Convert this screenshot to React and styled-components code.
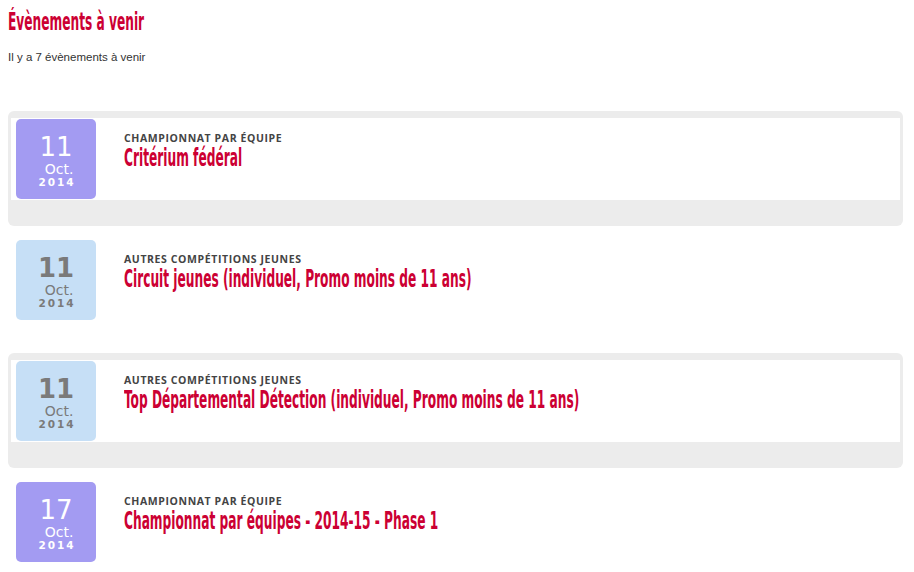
import styled, { createGlobalStyle } from "styled-components";

const events = [
	{ id: 1, day: "11", month: "Oct.", year: "2014", category: "Championnat par équipe", title: "Critérium fédéral", kind: "team" },
	{ id: 2, day: "11", month: "Oct.", year: "2014", category: "Autres compétitions jeunes", title: "Circuit jeunes (individuel, Promo moins de 11 ans)", kind: "youth" },
	{ id: 3, day: "11", month: "Oct.", year: "2014", category: "Autres compétitions jeunes", title: "Top Départemental Détection (individuel, Promo moins de 11 ans)", kind: "youth" },
	{ id: 4, day: "17", month: "Oct.", year: "2014", category: "Championnat par équipe", title: "Championnat par équipes - 2014-15 - Phase 1", kind: "team" },
];

const App = () => {
	return (
		<>
			<GlobalStyle />
			<Page>
				<Heading>Évènements à venir</Heading>
				<Count>Il y a 7 évènements à venir</Count>
				<List>
					{events.map((event, i) => (
						<Card key={event.id} striped={i % 2 === 0}>
							<Inner>
								<DateBox kind={event.kind}>
									<Day kind={event.kind}>{event.day}</Day>
									<Month>{event.month}</Month>
									<Year>{event.year}</Year>
								</DateBox>
								<Info>
									<Category>{event.category}</Category>
									<Title>{event.title}</Title>
								</Info>
							</Inner>
						</Card>
					))}
				</List>
			</Page>
		</>
	);
};

export default App;

const GlobalStyle = createGlobalStyle`
	body {
		margin: 0;
		background: #fff;
		font-family: "Liberation Sans", Arial, sans-serif;
	}
`;

// no narrow display face installed, so squeeze the condensed one
const condensed = `
	display: inline-block;
	font-family: "DejaVu Sans Condensed", "DejaVu Sans", sans-serif;
	font-weight: bold;
	color: #cc0033;
	transform: scaleX(0.565);
	transform-origin: left center;
	white-space: nowrap;
`;

const Page = styled.div`
	padding: 10px 11px 0 8px;
`;

const Heading = styled.h1`
	${condensed}
	margin: 0;
	font-size: 24px;
	line-height: 24px;
`;

const Count = styled.p`
	margin: 17px 0 0;
	font-family: "Liberation Sans", Arial, sans-serif;
	font-size: 11.5px;
	line-height: 13px;
	color: #333;
`;

const List = styled.div`
	margin-top: 47px;
`;

const Card = styled.div`
	padding: 7px 3px 26px;
	margin-bottom: 6px;
	border-radius: 6px;
	background: ${(props) => (props.striped ? "#ececec" : "transparent")};
`;

const Inner = styled.div`
	display: flex;
	align-items: flex-start;
	height: 82px;
	background: #fff;
	overflow: hidden;
`;

const DateBox = styled.div`
	flex: 0 0 80px;
	display: flex;
	flex-direction: column;
	align-items: center;
	box-sizing: border-box;
	height: 80px;
	margin: 1px 0 0 5px;
	padding-top: 15px;
	border-radius: 5px;
	font-family: "DejaVu Sans", Verdana, sans-serif;
	background: ${(props) => (props.kind === "team" ? "#a39bf2" : "#c6dff6")};
	color: ${(props) => (props.kind === "team" ? "#fff" : "#7a7a7a")};
`;

const Day = styled.div`
	font-size: 26px;
	line-height: 26px;
	font-weight: ${(props) => (props.kind === "team" ? "normal" : "bold")};
`;

const Month = styled.div`
	margin-top: 3px;
	font-size: 14px;
	line-height: 13px;
	padding-left: 6px;
`;

const Year = styled.div`
	font-size: 10.5px;
	line-height: 12px;
	font-weight: bold;
	letter-spacing: 2px;
	padding-left: 2px;
`;

const Info = styled.div`
	flex: 1;
	min-width: 0;
	display: flex;
	flex-direction: column;
	align-items: flex-start;
	margin-left: 28px;
	padding-top: 14px;
`;

const Category = styled.div`
	font-family: "Open Sans", "DejaVu Sans", sans-serif;
	font-size: 10.5px;
	line-height: 13px;
	font-weight: bold;
	letter-spacing: 0.6px;
	text-transform: uppercase;
	color: #444;
`;

const Title = styled.div`
	${condensed}
	margin-top: 1px;
	font-size: 24px;
	line-height: 24px;
`;
